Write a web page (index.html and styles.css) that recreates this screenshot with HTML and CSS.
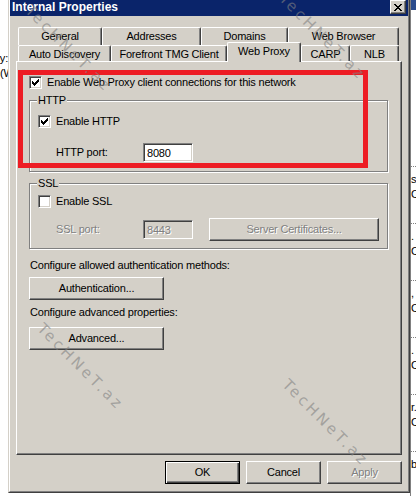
FILE: index.html
```html
<!DOCTYPE html>
<html>
<head>
<meta charset="utf-8">
<link rel="stylesheet" href="styles.css">
</head>
<body>
<div class="screen">
  <div class="left-strip">
    <div class="frag frag-end">Proxy:</div>
    <div class="frag">(Web</div>
  </div>
  <div class="dialog">
    <div class="dialog-inner">
      <div class="titlebar">
        <span class="title">Internal Properties</span>
        <span class="close"><svg width="8" height="7" viewBox="0 0 8 7" shape-rendering="crispEdges"><path fill="#000" d="M0 0h2v1h-2z M6 0h2v1h-2z M1 1h2v1h-2z M5 1h2v1h-2z M2 2h4v1h-4z M3 3h2v1h-2z M2 4h4v1h-4z M1 5h2v1h-2z M5 5h2v1h-2z M0 6h2v1h-2z M6 6h2v1h-2z"/></svg></span>
      </div>
      <div class="tabs">
        <div class="tabrow row1">
          <div class="tab w-general">General</div>
          <div class="tab w-addresses">Addresses</div>
          <div class="tab w-domains">Domains</div>
          <div class="tab w-browser">Web Browser</div>
        </div>
        <div class="tabrow row2">
          <div class="tab w-auto">Auto Discovery</div>
          <div class="tab w-tmg">Forefront TMG Client</div>
          <div class="tab w-proxy active">Web Proxy</div>
          <div class="tab w-carp">CARP</div>
          <div class="tab w-nlb">NLB</div>
        </div>
      </div>
      <div class="panel">
        <div class="chk-row first">
          <span class="chk"><svg width="7" height="7" viewBox="0 0 7 7" shape-rendering="crispEdges"><path fill="#000" d="M0 2h1v3h-1z M1 3h1v3h-1z M2 4h1v3h-1z M3 3h1v3h-1z M4 2h1v3h-1z M5 1h1v3h-1z M6 0h1v3h-1z"/></svg></span>
          <span class="chk-label">Enable Web Proxy client connections for this network</span>
        </div>
        <div class="group http">
          <div class="group-label">HTTP</div>
          <div class="chk-row http-chk">
            <span class="chk"><svg width="7" height="7" viewBox="0 0 7 7" shape-rendering="crispEdges"><path fill="#000" d="M0 2h1v3h-1z M1 3h1v3h-1z M2 4h1v3h-1z M3 3h1v3h-1z M4 2h1v3h-1z M5 1h1v3h-1z M6 0h1v3h-1z"/></svg></span>
            <span class="chk-label">Enable HTTP</span>
          </div>
          <div class="port-row http-port">
            <span class="port-label">HTTP port:</span>
            <span class="input">8080</span>
          </div>
        </div>
        <div class="group ssl">
          <div class="group-label">SSL</div>
          <div class="chk-row ssl-chk">
            <span class="chk"></span>
            <span class="chk-label">Enable SSL</span>
          </div>
          <div class="port-row ssl-port">
            <span class="port-label disabled">SSL port:</span>
            <span class="input input-disabled"><span class="disabled">8443</span></span>
            <span class="btn btn-cert"><span class="disabled">Server Certificates...</span></span>
          </div>
        </div>
        <div class="text-line auth-text">Configure allowed authentication methods:</div>
        <div class="btn btn-wide auth-btn">Authentication...</div>
        <div class="text-line adv-text">Configure advanced properties:</div>
        <div class="btn btn-wide adv-btn">Advanced...</div>
      </div>
      <div class="buttons">
        <div class="btn btn-dlg btn-default">OK</div>
        <div class="btn btn-dlg">Cancel</div>
        <div class="btn btn-dlg"><span class="disabled">Apply</span></div>
      </div>
    </div>
  </div>
  <div class="right-strip">
    <div class="rs-top"></div>
    <div class="rs-list">
      <div class="rs-item"><div>s.</div><div>Co</div></div>
      <div class="rs-item"><div>.</div><div>Co</div></div>
      <div class="rs-item"><div>,</div><div>Co</div></div>
      <div class="rs-item"><div>.</div><div>Co</div></div>
      <div class="rs-item"><div>r.</div><div>Co</div></div>
      <div class="rs-item"><div>bk</div><div></div></div>
    </div>
  </div>
</div>
<div class="overlay">
  <div class="redbox"></div>
  <div class="wm wm1">TecHNeT.az</div>
  <div class="wm wm2">TecHNeT.az</div>
  <div class="wm wm3">TecHNeT.az</div>
  <div class="wm wm4">TecHNeT.az</div>
</div>
</body>
</html>
```
FILE: styles.css
```css
* { box-sizing: border-box; }
html, body { margin: 0; padding: 0; }
body {
  width: 416px;
  height: 496px;
  overflow: hidden;
  background: #fff;
  font-family: "Liberation Sans", Arial, sans-serif;
  font-size: 11px;
  letter-spacing: -0.2px;
  color: #000;
  position: relative;
}
.screen { display: flex; height: 496px; }

/* outside fragments */
.left-strip { width: 8px; flex: none; overflow: hidden; padding-top: 51px; }
.frag { white-space: nowrap; line-height: 15px; height: 15px; display: flex; }
.frag-end { justify-content: flex-end; }

.right-strip {
  width: 6px;
  flex: none;
  overflow: hidden;
  border-left: 1px solid #808080;
  background: #fff;
}
.rs-top { height: 10px; background: #2b4c8c; }
.rs-list { margin-top: 156px; }
.rs-item {
  height: 57px;
  border-top: 1px dotted #808080;
  padding-top: 5px;
  line-height: 15px;
  white-space: nowrap;
}

/* dialog frame */
.dialog {
  width: 402px;
  height: 493px;
  flex: none;
  background: #d4d0c8;
  border-left: 1px solid #d4d0c8;
  border-right: 1px solid #404040;
  border-bottom: 1px solid #404040;
}
.dialog-inner {
  height: 100%;
  border-left: 1px solid #fff;
  border-right: 1px solid #808080;
  border-bottom: 1px solid #808080;
  display: flex;
  flex-direction: column;
}
.titlebar {
  height: 16px;
  flex: none;
  background: #0a246a;
  display: flex;
  justify-content: space-between;
  align-items: flex-start;
  padding: 0 2px;
}
.title {
  color: #fff;
  font-weight: bold;
  font-size: 12px;
  letter-spacing: 0;
  line-height: 15px;
}
.close {
  width: 16px;
  height: 14px;
  background: #d4d0c8;
  border: 1px solid;
  border-color: #fff #404040 #404040 #fff;
  box-shadow: inset -1px -1px 0 #808080;
  display: flex;
  align-items: center;
  justify-content: center;
}
.close svg { display: block; }

/* tabs */
.tabs { margin-top: 11px; padding-left: 8px; flex: none; }
.tabrow { display: flex; }
.row1 { height: 18px; }
.row2 { height: 16px; align-items: flex-start; }
.tab {
  border-top: 1px solid #fff;
  border-left: 1px solid #fff;
  border-right: 1px solid #404040;
  box-shadow: inset -1px 0 0 #808080;
  border-radius: 2px 2px 0 0;
  text-align: center;
  line-height: 13px;
  white-space: nowrap;
  background: #d4d0c8;
}
.row1 .tab { height: 18px; padding-top: 2px; }
.row2 .tab { height: 16px; padding-top: 2px; }
.row2 .tab.active {
  height: 20px;
  margin-top: -3px;
  padding-top: 2px;
  position: relative;
  z-index: 2;
}
.w-general { width: 84px; }
.w-addresses { width: 99px; }
.w-domains { width: 87px; }
.w-browser { width: 111px; }
.w-auto { width: 93px; }
.w-tmg { width: 116px; }
.w-proxy { width: 74px; }
.w-carp { width: 49px; }
.w-nlb { width: 49px; }

/* panel */
.panel {
  margin-left: 6px;
  width: 386px;
  height: 394px;
  flex: none;
  border-top: 1px solid #fff;
  border-left: 1px solid #fff;
  border-right: 1px solid #404040;
  border-bottom: 1px solid #404040;
  box-shadow: inset -1px -1px 0 #808080;
  padding: 0 13px 0 12px;
}

.chk-row { display: flex; align-items: center; height: 13px; line-height: 13px; white-space: nowrap; }
.chk-row.first { margin-top: 14px; }
.chk {
  width: 13px;
  height: 13px;
  flex: none;
  background: #fff;
  border: 1px solid;
  border-color: #808080 #fff #fff #808080;
  box-shadow: inset 1px 1px 0 #404040, inset -1px -1px 0 #d4d0c8;
  padding: 2px;
}
.chk svg { display: block; }
.chk-label { margin-left: 5px; }

.group {
  border: 1px solid #808080;
  box-shadow: 1px 1px 0 #fff, inset 1px 1px 0 #fff;
  width: 359px;
  padding: 0 8px;
}
.group.http { margin-top: 11px; padding-bottom: 9px; }
.group.ssl { margin-top: 11px; padding-bottom: 7px; }
.group-label {
  margin-top: -7px;
  margin-left: -1px;
  padding: 0 1px;
  width: fit-content;
  background: #d4d0c8;
  line-height: 13px;
  height: 13px;
}
.http-chk { margin-top: 8px; }
.ssl-chk { margin-top: 5px; }

.port-row { display: flex; align-items: center; padding-left: 18px; }
.http-port { margin-top: 15px; height: 19px; }
.ssl-port { margin-top: 10px; height: 23px; }
.port-label { width: 87px; line-height: 13px; }
.input {
  width: 50px;
  height: 19px;
  background: #fff;
  border: 1px solid;
  border-color: #808080 #fff #fff #808080;
  box-shadow: inset 1px 1px 0 #404040, inset -1px -1px 0 #d4d0c8;
  padding: 2px 0 0 3px;
  line-height: 14px;
}
.input-disabled { background: #d4d0c8; }

.disabled { color: #808080; text-shadow: 1px 1px 0 #fff; }

.btn {
  height: 23px;
  border: 1px solid;
  border-color: #fff #404040 #404040 #fff;
  box-shadow: inset -1px -1px 0 #808080;
  display: flex;
  align-items: center;
  justify-content: center;
  line-height: 13px;
  white-space: nowrap;
  background: #d4d0c8;
}
.btn-cert { width: 170px; margin-left: 16px; }
.btn-wide { width: 135px; }
.text-line { line-height: 13px; height: 13px; padding-left: 1px; white-space: nowrap; }
.auth-text { margin-top: 10px; }
.auth-btn { margin-top: 5px; }
.adv-text { margin-top: 6px; }
.adv-btn { margin-top: 8px; }

.buttons {
  margin-top: 6px;
  display: flex;
  justify-content: flex-end;
  gap: 6px;
  padding-right: 6px;
}
.btn-dlg { width: 75px; }
.btn-default {
  border: 1px solid #000;
  box-shadow: inset 1px 1px 0 #fff, inset -1px -1px 0 #404040, inset -2px -2px 0 #808080;
}

/* overlay annotations */
.overlay { position: absolute; left: 0; top: 0; width: 416px; height: 496px; pointer-events: none; }
.redbox {
  position: absolute;
  left: 18px;
  top: 70px;
  width: 350px;
  height: 98px;
  border: 5px solid #ed1c24;
}
.wm {
  position: absolute;
  font-family: "DejaVu Sans", sans-serif;
  font-weight: normal;
  font-size: 15px;
  letter-spacing: 3px;
  line-height: 16px;
  color: rgba(130, 130, 130, 0.6);
  transform-origin: 0 50%;
  transform: rotate(45deg);
  white-space: nowrap;
}
.wm1 { left: 28px; top: 0px; }
.wm2 { left: 282px; top: -12px; }
.wm3 { left: 40px; top: 318px; }
.wm4 { left: 285px; top: 374px; }
```
